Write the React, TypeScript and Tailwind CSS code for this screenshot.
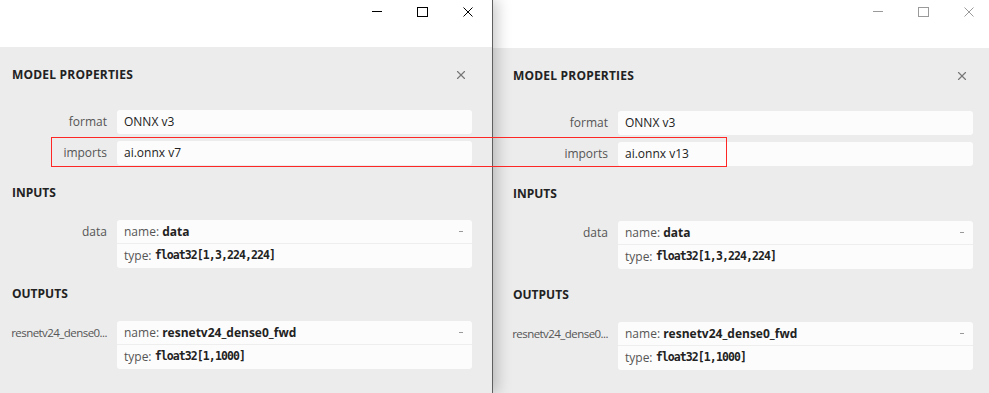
import { X } from 'lucide-react'

type Arg = { label: string; name: string; type: string }

const ui = { fontFamily: '"Open Sans", "Noto Sans", sans-serif' }
const mono = { fontFamily: '"DejaVu Sans Mono", "Liberation Mono", monospace' }

function WindowButtons({ active }: { active: boolean }) {
  const c = active ? '#000' : '#9a9a9a'
  return (
    <div className="flex items-start justify-end h-full pr-[19px] pt-[7px] gap-[35px]">
      <svg width="10" height="10" viewBox="0 0 10 10">
        <line x1="0" y1="4.5" x2="10" y2="4.5" stroke={c} strokeWidth="1" />
      </svg>
      <svg width="11" height="10" viewBox="0 0 11 10">
        <rect x="0.5" y="0.5" width="10" height="9" fill="none" stroke={c} strokeWidth="1" />
      </svg>
      <svg width="10" height="10" viewBox="0 0 10 10">
        <path d="M0.5 0.5 L9.5 9.5 M9.5 0.5 L0.5 9.5" stroke={c} strokeWidth="1" />
      </svg>
    </div>
  )
}

function Row({ label, value }: { label: string; value: string }) {
  return (
    <div className="flex items-center">
      <div className="w-[105px] shrink-0 pr-[10px] text-right text-[12px] text-[#555]">{label}</div>
      <div className="flex-1 h-6 flex items-center px-[7px] bg-[#fcfcfc] rounded-[3px] text-[12px] text-[#222]">
        {value}
      </div>
    </div>
  )
}

function ArgRow({ arg }: { arg: Arg }) {
  const long = arg.label.length > 12
  return (
    <div className="flex items-start">
      <div
        className={`w-[105px] shrink-0 pr-[10px] h-6 flex items-center justify-end text-[#555] whitespace-nowrap ${
          long ? 'text-[11.5px] tracking-[-0.55px]' : 'text-[12px]'
        }`}
      >
        {arg.label}
      </div>
      <div className="flex-1 bg-[#fcfcfc] rounded-[3px] text-[12px] text-[#555]">
        <div className="h-6 flex items-center justify-between px-[7px] border-b border-[#eeeeee]">
          <span>
            name: <span className="font-bold text-[#222]">{arg.name}</span>
          </span>
          <span className="w-[4px] h-px bg-[#999] mr-[2px]" />
        </div>
        <div className="h-6 flex items-center px-[7px]">
          <span>type:&nbsp;</span>
          <span className="font-bold text-[#222] text-[11.5px] tracking-[-0.9px]" style={mono}>
            {arg.type}
          </span>
        </div>
      </div>
    </div>
  )
}

function Panel({
  imports,
  active,
  pad,
  titleH,
}: {
  imports: string
  active: boolean
  pad: string
  titleH: string
}) {
  return (
    <div className="flex flex-col h-full w-full" style={ui}>
      <div className={`${titleH} bg-white shrink-0`}>
        <WindowButtons active={active} />
      </div>
      <div className={`flex-1 bg-[#ececec] pr-[20px] ${pad}`}>
        <div className="flex items-center justify-between h-4 mt-[20px]">
          <span className="text-[12px] font-bold tracking-[0.2px] text-[#222]">MODEL PROPERTIES</span>
          <X size={14} strokeWidth={2} className="text-[#777] mr-[4px]" />
        </div>
        <div className="mt-[27px] flex flex-col gap-[7px]">
          <Row label="format" value="ONNX v3" />
          <Row label="imports" value={imports} />
        </div>
        <div className="mt-[20px] h-4 flex items-center text-[12px] font-bold text-[#222]">INPUTS</div>
        <div className="mt-[19px]">
          <ArgRow arg={{ label: 'data', name: 'data', type: 'float32[1,3,224,224]' }} />
        </div>
        <div className="mt-[18px] h-4 flex items-center text-[12px] font-bold text-[#222]">OUTPUTS</div>
        <div className="mt-[19px]">
          <ArgRow arg={{ label: 'resnetv24_dense0...', name: 'resnetv24_dense0_fwd', type: 'float32[1,1000]' }} />
        </div>
      </div>
    </div>
  )
}

export default function App() {
  return (
    <div className="relative w-[989px] h-[393px] overflow-hidden flex bg-[#ececec]">
      <div className="relative z-10 flex h-full shrink-0 shadow-[4px_0_14px_rgba(0,0,0,0.22)]">
        <div className="w-[492px] h-full">
          <Panel imports="ai.onnx v7" active pad="pl-3" titleH="h-[47px]" />
        </div>
        <div className="w-px h-full bg-[#5f5f5f]" />
      </div>
      <div className="w-[500px] h-full shrink-0">
        <Panel imports="ai.onnx v13" active={false} pad="pl-5" titleH="h-[48px]" />
      </div>

      {/* annotation */}
      <div className="absolute z-20 left-[51px] top-[137px] w-[676px] h-[30px] border-[1.5px] border-[#ff2626]" />
    </div>
  )
}
